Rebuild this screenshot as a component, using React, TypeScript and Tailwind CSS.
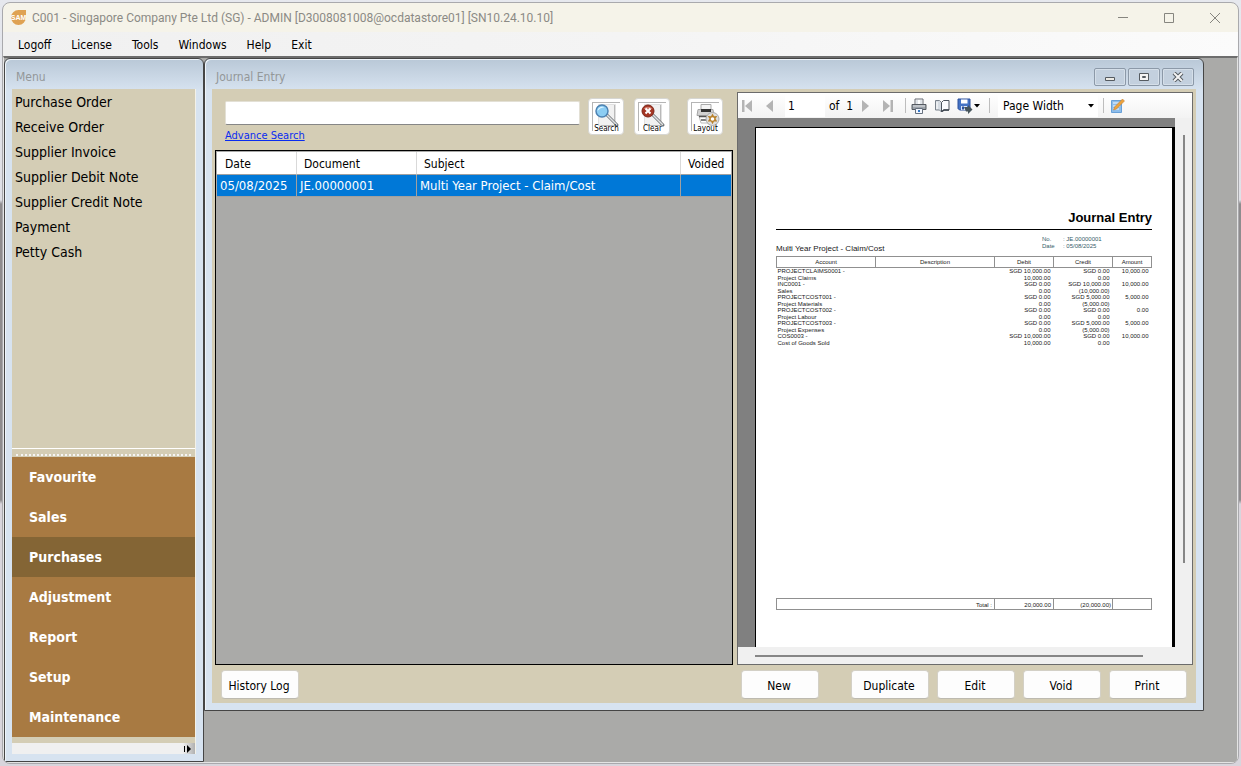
import type { ReactNode } from 'react';

const menuBar = ['Logoff', 'License', 'Tools', 'Windows', 'Help', 'Exit'];

const documents = [
  'Purchase Order',
  'Receive Order',
  'Supplier Invoice',
  'Supplier Debit Note',
  'Supplier Credit Note',
  'Payment',
  'Petty Cash',
];

const modules = ['Favourite', 'Sales', 'Purchases', 'Adjustment', 'Report', 'Setup', 'Maintenance'];

const lines = [
  { account: 'PROJECTCLAIMS0001 -', name: 'Project Claims', debit: 'SGD 10,000.00', debit2: '10,000.00', credit: 'SGD 0.00', credit2: '0.00', amount: '10,000.00' },
  { account: 'INC0001 -', name: 'Sales', debit: 'SGD 0.00', debit2: '0.00', credit: 'SGD 10,000.00', credit2: '(10,000.00)', amount: '10,000.00' },
  { account: 'PROJECTCOST001 -', name: 'Project Materials', debit: 'SGD 0.00', debit2: '0.00', credit: 'SGD 5,000.00', credit2: '(5,000.00)', amount: '5,000.00' },
  { account: 'PROJECTCOST002 -', name: 'Project Labour', debit: 'SGD 0.00', debit2: '0.00', credit: 'SGD 0.00', credit2: '0.00', amount: '0.00' },
  { account: 'PROJECTCOST003 -', name: 'Project Expenses', debit: 'SGD 0.00', debit2: '0.00', credit: 'SGD 5,000.00', credit2: '(5,000.00)', amount: '5,000.00' },
  { account: 'COS0003 -', name: 'Cost of Goods Sold', debit: 'SGD 10,000.00', debit2: '10,000.00', credit: 'SGD 0.00', credit2: '0.00', amount: '10,000.00' },
];

function Logo() {
  return (
    <svg viewBox="0 0 17 17" className="size-[17px] shrink-0" aria-hidden="true">
      <path d="M8.500 1H16v7.500a7.500 7.500 0 1 1-7.500-7.500z" fill="#dfa253" />
      <text x="8.500" y="11" textAnchor="middle" fontSize="7" fontWeight="700" fontFamily="Liberation Sans, sans-serif" fill="#fff">SAM</text>
    </svg>
  );
}

function CaptionButton({ label, children }: { label: string; children: ReactNode }) {
  return (
    <button type="button" aria-label={label} className="flex h-[30px] w-[46px] items-center justify-center">
      <svg viewBox="0 0 12 12" className="size-3" fill="none" stroke="#86857f" strokeWidth="1">{children}</svg>
    </button>
  );
}

function ChildButton({ label, children }: { label: string; children: ReactNode }) {
  return (
    <button type="button" aria-label={label} className="flex h-[18px] w-8 items-center justify-center rounded-[2px] border border-[#8c99a8] bg-[#c3d0de] shadow-[inset_0_0_0_1px_#d5dfe9]">
      <svg viewBox="0 0 12 10" className="h-[10px] w-3" fill="none" stroke="#555b61" strokeWidth="1">{children}</svg>
    </button>
  );
}

function Magnifier({ cancel = false }: { cancel?: boolean }) {
  return (
    <svg viewBox="0 0 28 24" className="h-6 w-7" aria-hidden="true">
      <path d="M5.500.500h17v21h-17z" fill="#f1f1f1" stroke="#e0e0e0" />
      <path d="M21.500 1v20.500H8" fill="none" stroke="#b9b9b9" />
      <path d="M14 11l10 10" stroke="#6d7175" strokeWidth="3" strokeLinecap="round" />
      <path d="M14 11l9.500 9.500" stroke="#dfe1e3" strokeWidth="1.500" strokeLinecap="round" />
      {cancel ? (
        <>
          <circle cx="9" cy="7" r="6" fill="#a43523" stroke="#7d2416" />
          <path d="M4.500 5a5 4 0 0 1 9 0z" fill="#cf7a6b" />
          <path d="M6.500 4.500l5 5m0-5l-5 5" stroke="#fff" strokeWidth="2" />
        </>
      ) : (
        <>
          <circle cx="9" cy="7" r="6" fill="#8ccdf3" stroke="#4c82b2" strokeWidth="1.500" />
          <path d="M4.500 7a4.500 4.500 0 0 1 7-3.500c-3 0-5 1-7 3.500z" fill="#dff4ff" />
        </>
      )}
    </svg>
  );
}

function LayoutIcon() {
  return (
    <svg viewBox="0 0 28 24" className="h-6 w-7" aria-hidden="true">
      <path d="M9 .500h10v6H9z" fill="#f4f4f4" stroke="#aaa" />
      <path d="M6 5.500h15l1 6H5z" fill="#d2d2d2" stroke="#a5a5a5" />
      <path d="M9 5h10v3H9z" fill="#333" />
      <path d="M7 12h13l2 7H9z" fill="#fff" stroke="#bbb" />
      <path d="M7 12.500h9M9 16h6" stroke="#555" strokeWidth="1.500" />
      <circle cx="20.500" cy="15" r="6.500" fill="#dedede" stroke="#aaa" />
      <path d="M20.500 9.500l1.500 2.800 3.300-.3-1.800 2.800 1.800 2.800-3.300-.2-1.500 2.900-1.500-2.900-3.300.2 1.800-2.800-1.800-2.800 3.300.3z" fill="#b9822c" />
      <circle cx="20.500" cy="15" r="1.800" fill="#fff" />
    </svg>
  );
}

function ToolButton({ label, children }: { label: string; children: ReactNode }) {
  return (
    <button type="button" className="flex h-[37px] w-9 flex-col items-center rounded-[4px] border border-[#d6d6d2] bg-white p-[3px]">
      <span className="flex h-full w-full flex-col items-center border-t border-l border-[#b5b5b5] pt-px">
        <span className="-mb-[3px] block">{children}</span>
        <span className="relative text-[8px] leading-[8px] text-black">{label}</span>
      </span>
    </button>
  );
}

function PushButton({ children }: { children: ReactNode }) {
  return (
    <button type="button" className="h-[29px] w-[78px] rounded-[4px] border border-[#d3d0c6] border-b-[#bdbab0] bg-[#fdfdfd] pt-[2px] pr-[2px] text-[12px] text-black">
      {children}
    </button>
  );
}

function NavButton({ label, last = false, back = false }: { label: string; last?: boolean; back?: boolean }) {
  return (
    <button type="button" aria-label={label} className="flex size-4 items-center justify-center">
      <svg viewBox="0 0 12 12" className={back ? 'size-3 rotate-180' : 'size-3'} aria-hidden="true">
        <path d={last ? 'M1 0v12l7-6z' : 'M3 0v12l7-6z'} fill="#b4b4b4" />
        {last && <path d="M8.500 0h2.500v12H8.500z" fill="#b4b4b4" />}
      </svg>
    </button>
  );
}

function ReportToolbar() {
  return (
    <div className="flex h-[25px] items-center bg-gradient-to-b from-white to-[#f3f3f3] pl-px text-[12px] text-black">
      <NavButton label="First page" last back />
      <div className="ml-[7px] flex"><NavButton label="Previous page" back /></div>
      <input aria-label="Page number" defaultValue="1" className="ml-[7px] h-[22px] w-10 bg-white px-[3px] outline-none" />
      <span className="ml-1 w-7 whitespace-nowrap">of&nbsp; 1</span>
      <div className="flex gap-[7px]">
        <NavButton label="Next page" />
        <NavButton label="Last page" last />
      </div>
      <i className="ml-[9px] h-[15px] w-px bg-[#bdbdbd]" />
      <button type="button" aria-label="Print report" className="ml-[5px]">
        <svg viewBox="0 0 16 16" className="size-4">
          <path d="M4 1h8v6H4z" fill="#fff" stroke="#666b73" />
          <path d="M6 2v4M10 2v4" stroke="#c4ccd5" />
          <path d="M1 6.500h14v5H1z" fill="#9da3aa" stroke="#555a61" />
          <path d="M2 8h12" stroke="#e1e4e8" />
          <path d="M4.500 10.500h7v5h-7z" fill="#f4f8ff" stroke="#67717e" />
          <path d="M7 12h2v2H7z" fill="#3478c9" />
        </svg>
      </button>
      <button type="button" aria-label="Print layout" className="ml-[7px]">
        <svg viewBox="0 0 16 16" className="size-4">
          <path d="M1.500 2.500h4l2 2v9.500l-2-2h-4z" fill="#d5dbe2" stroke="#7a828c" />
          <path d="M7.500 4.500l2-2h5.500v9.500H9.500l-2 2z" fill="#fafcff" stroke="#4c5560" />
          <path d="M8 13.500l2-1.500h5" fill="none" stroke="#39414b" strokeWidth="1.500" />
          <path d="M3 4v7" stroke="#fff" />
        </svg>
      </button>
      <button type="button" aria-label="Export" className="ml-[7px] flex items-center gap-px">
        <svg viewBox="0 0 16 16" className="size-4">
          <path d="M1 1h12v11H2.500L1 10.500z" fill="#4473c4" stroke="#2c519c" />
          <path d="M4 1.500h6.500v4H4z" fill="#fff" />
          <path d="M4 8h6v4H4z" fill="#dce6f6" />
          <path d="M5 8.500h2v3H5z" fill="#2c519c" />
          <path d="M7 9h4V7l4.500 4.500L11 16v-2.500H9z" fill="#46555c" />
        </svg>
        <svg viewBox="0 0 6 4" className="h-1 w-[6px]"><path d="M0 0h6L3 3.500z" fill="#000" /></svg>
      </button>
      <i className="ml-[9px] h-[15px] w-px bg-[#bdbdbd]" />
      <div className="relative ml-2 flex items-center">
        <select aria-label="Zoom" className="h-[22px] w-[100px] appearance-none bg-white pl-[5px] outline-none">
          <option>Page Width</option>
        </select>
        <svg viewBox="0 0 6 4" className="pointer-events-none absolute right-1 h-1 w-[6px]"><path d="M0 0h6L3 3.500z" fill="#000" /></svg>
      </div>
      <i className="ml-[5px] h-[15px] w-px bg-[#bdbdbd]" />
      <button type="button" aria-label="Edit layout" className="ml-[6px]">
        <svg viewBox="0 0 16 16" className="size-4">
          <path d="M1.500 2.500h10v12h-10z" fill="#8dbdeb" stroke="#68a0d8" />
          <path d="M3 5h7M3 8h7M3 11h6" stroke="#f2f8ff" />
          <path d="M12.500 1l2 2-8 8-3 1 1-3z" fill="#eca23c" stroke="#b8752a" strokeWidth=".5" />
        </svg>
      </button>
    </div>
  );
}

function ReportColumns() {
  return (
    <colgroup>
      <col />
      <col className="w-[119px]" />
      <col className="w-[59px]" />
      <col className="w-[59px]" />
      <col className="w-[39px]" />
    </colgroup>
  );
}

function Pair({ top, bottom }: { top: string; bottom?: string }) {
  return (
    <>
      <span className="block h-[7px]">{top}</span>
      <span className="block h-[6px]">{bottom}</span>
    </>
  );
}

function ReportPage() {
  return (
    <article className="flex min-h-0 flex-1 flex-col border-t border-r-[3px] border-l border-black bg-white px-5 pt-[82px] pb-[37px] font-['Liberation_Sans',Arial,sans-serif] text-[6px] leading-[6px] text-[#202020]">
      <h2 className="border-b border-black pb-[3px] text-right text-[13px] leading-4 font-bold text-black">Journal Entry</h2>
      <dl className="mt-[6px] ml-auto grid w-[110px] grid-cols-[21px_1fr] leading-[7px] text-[#35606a]">
        <dt>No.</dt>
        <dd>: JE.00000001</dd>
        <dt>Date</dt>
        <dd>: 05/08/2025</dd>
      </dl>
      <p className="-mt-[6px] text-[8px] leading-[9px]">Multi Year Project - Claim/Cost</p>
      <table className="mt-[3px] w-full table-fixed border-collapse">
        <ReportColumns />
        <thead>
          <tr className="h-[11px]">
            {['Account', 'Description', 'Debit', 'Credit', 'Amount'].map((h) => (
              <th key={h} className="border border-[#909090] p-0 text-center font-normal">{h}</th>
            ))}
          </tr>
        </thead>
        <tbody>
          {lines.map((l) => (
            <tr key={l.account} className="align-top">
              <td className="p-0 pl-px" colSpan={2}><Pair top={l.account} bottom={l.name} /></td>
              <td className="p-0 pr-[3px] text-right"><Pair top={l.debit} bottom={l.debit2} /></td>
              <td className="p-0 pr-[3px] text-right"><Pair top={l.credit} bottom={l.credit2} /></td>
              <td className="p-0 pr-[3px] text-right"><Pair top={l.amount} /></td>
            </tr>
          ))}
        </tbody>
      </table>
      <table className="mt-auto w-full table-fixed border-collapse">
        <ReportColumns />
        <tbody>
          <tr className="h-[11px] text-right">
            <td colSpan={2} className="border border-[#909090] p-0 pt-px pr-[2px]">Total :</td>
            <td className="border border-[#909090] p-0 pt-px pr-[2px]">20,000.00</td>
            <td className="border border-[#909090] p-0 pt-px pr-px">(20,000.00)</td>
            <td className="border border-[#909090] p-0" />
          </tr>
        </tbody>
      </table>
    </article>
  );
}

function MdiWindow({ title, controls, className, children }: { title: string; controls?: ReactNode; className: string; children: ReactNode }) {
  return (
    <section className={`flex flex-col rounded-t-[6px] border border-[#454545] bg-[#d7e3f0] bg-[linear-gradient(#b9c8d7,#d7e3f0_32px)] px-[7px] pb-[7px] shadow-[inset_1px_1px_0_#eef4fa] ${className}`}>
      <header className="flex h-[30px] shrink-0 items-center justify-between pt-[6px] pl-1">
        <h1 className="text-[12px] leading-4 text-[#939799]">{title}</h1>
        {controls}
      </header>
      {children}
    </section>
  );
}

function SideMenu() {
  return (
    <MdiWindow title="Menu" className="w-[200px] shrink-0">
      <div className="flex min-h-0 flex-1 flex-col border-r border-[#f3f1e8] bg-[#d4cdb5]">
        <ul className="flex-1 border-b border-white pt-px">
          {documents.map((d) => (
            <li key={d}>
              <a href="#" className="block pl-[3px] text-[14px] leading-[25px] text-black">{d}</a>
            </li>
          ))}
        </ul>
        <div className="mx-1 mt-1 mb-px h-[3px] border-b-2 border-dotted border-[#f5f5f5]" />
        <nav>
          {modules.map((m) => (
            <a key={m} href="#" className={`block pl-[17px] text-[14px] leading-10 font-bold text-white ${m === 'Purchases' ? 'bg-[#846535]' : 'bg-[#a87a42]'}`}>{m}</a>
          ))}
        </nav>
        <div className="mt-[6px] flex h-[11px] items-center justify-end bg-[#f0f0f0]">
          <button type="button" aria-label="Configure buttons" className="flex h-full w-3 items-center justify-center bg-gradient-to-r from-[#f0f0f0] to-[#b0b0b0] pr-1">
            <svg viewBox="0 0 7 8" className="h-2 w-[7px] shrink-0"><path d="M0 1h1v6H0zM3 0v8l4-4z" fill="#000" /></svg>
          </button>
        </div>
      </div>
    </MdiWindow>
  );
}

function EntryGrid() {
  return (
    <div className="min-h-0 flex-1 border border-black bg-[#aaaaa8] p-px">
      <table className="w-full table-fixed border-separate border-spacing-0 text-left text-[12px]">
        <colgroup>
          <col className="w-20" />
          <col className="w-[120px]" />
          <col />
          <col className="w-[50px]" />
        </colgroup>
        <thead>
          <tr className="h-[23px] bg-white text-black">
            <th className="border-r border-b border-[#d9d9d9] border-b-[#a0a0a0] p-0 pt-px pl-2 font-normal">Date</th>
            <th className="border-r border-b border-[#d9d9d9] border-b-[#a0a0a0] p-0 pt-px pl-[7px] font-normal">Document</th>
            <th className="border-r border-b border-[#d9d9d9] border-b-[#a0a0a0] p-0 pt-px pl-[7px] font-normal">Subject</th>
            <th className="border-b border-[#a0a0a0] p-0 pt-px pl-[7px] font-normal">Voided</th>
          </tr>
        </thead>
        <tbody>
          <tr className="h-[22px] bg-[#0078d7] text-[13px] leading-4 text-white">
            <td className="border-r border-b border-[#a0a0a0] p-0 pl-[3px]">05/08/2025</td>
            <td className="border-r border-b border-[#a0a0a0] p-0 pl-[3px]">JE.00000001</td>
            <td className="border-r border-b border-[#a0a0a0] p-0 pl-[3px]">Multi Year Project - Claim/Cost</td>
            <td className="border-b border-[#a0a0a0] p-0" />
          </tr>
        </tbody>
      </table>
    </div>
  );
}

function JournalEntry() {
  return (
    <MdiWindow
      title="Journal Entry"
      className="mb-[51px] min-w-0 flex-1"
      controls={
        <div className="flex gap-[2px] pr-[2px]">
          <ChildButton label="Minimise window"><path d="M1.500 5.500h9v3h-9z" fill="#eceae4" /></ChildButton>
          <ChildButton label="Restore window"><path d="M1.500 1.500h9v7h-9z" fill="#f4f4f4" /><path d="M4.500 4.500h3v1h-3z" /></ChildButton>
          <ChildButton label="Close window">
            <path d="M2 1l8 8M10 1L2 9" strokeWidth="4" />
            <path d="M2 1l8 8M10 1L2 9" stroke="#f4f4f4" strokeWidth="2" />
          </ChildButton>
        </div>
      }
    >
      <div className="flex min-h-0 flex-1 flex-col bg-[#d4cdb5] pt-[3px]">
        <div className="flex min-h-0 flex-1 gap-1 px-[3px]">
          <div className="flex min-w-0 flex-1 flex-col">
            <div className="flex h-[58px] pt-[6px] pl-[10px]">
              <div className="flex min-w-0 flex-1 flex-col items-start pt-[3px]">
                <input aria-label="Search text" className="h-6 w-full rounded-[2px] border border-[#e3e0d5] border-b-[#868686] bg-white px-1 text-[12px] outline-none" />
                <a href="#" className="mt-[3px] text-[11px] leading-4 text-[#0a2cf0] underline">Advance Search</a>
              </div>
              <div className="ml-2 flex shrink-0 pr-[10px]">
                <ToolButton label="Search"><Magnifier /></ToolButton>
                <div className="mr-[17px] ml-[10px]"><ToolButton label="Clear"><Magnifier cancel /></ToolButton></div>
                <ToolButton label="Layout"><LayoutIcon /></ToolButton>
              </div>
            </div>
            <EntryGrid />
          </div>
          <div className="flex w-[456px] shrink-0 flex-col border border-[#6b6b6b]">
            <ReportToolbar />
            <div className="flex min-h-0 flex-1">
              <div className="flex min-w-0 flex-1 flex-col bg-[#808080] pt-[9px] pl-[17px]">
                <ReportPage />
              </div>
              <div className="w-[17px] bg-[#f0f0f0] pt-[17px] pl-2">
                <div className="h-[428px] w-[2px] bg-[#868686]" />
              </div>
            </div>
            <div className="h-[17px] bg-[#f0f0f0] pt-2 pl-[17px]">
              <div className="h-[2px] w-[388px] bg-[#868686]" />
            </div>
          </div>
        </div>
        <footer className="flex h-[38px] shrink-0 items-center gap-2 px-[9px] pt-px">
          <PushButton>History Log</PushButton>
          <div className="mr-6 ml-auto"><PushButton>New</PushButton></div>
          <PushButton>Duplicate</PushButton>
          <PushButton>Edit</PushButton>
          <PushButton>Void</PushButton>
          <PushButton>Print</PushButton>
        </footer>
      </div>
    </MdiWindow>
  );
}

export default function App() {
  return (
    <div className="h-screen min-h-[600px] bg-[#c4c4c8] bg-[linear-gradient(#e6e8ee_0,#dfe0e6_200px,#8e8c8e_204px,#8e8c8e_500px,#d8d5dc_504px,#d8d5dc_100%)] p-[2px] font-['DejaVu_Sans_Condensed','Noto_Sans',sans-serif]">
      <div className="flex h-full flex-col overflow-hidden rounded-[8px] border border-[#a9a9ad] bg-[#f5f3e9]">
        <header className="flex h-[29px] shrink-0 items-center pl-[7px]">
          <Logo />
          <span className="ml-[5px] flex-1 font-['Roboto',sans-serif] text-[12px] whitespace-nowrap text-[#8b8a85]">
            C001 - Singapore Company Pte Ltd (SG) - ADMIN [D3008081008@ocdatastore01] [SN10.24.10.10]
          </span>
          <CaptionButton label="Minimise"><path d="M1 5.500h10" /></CaptionButton>
          <CaptionButton label="Maximise"><path d="M1.500 1.500h9v9h-9z" /></CaptionButton>
          <CaptionButton label="Close"><path d="M1 1l10 10M11 1L1 11" /></CaptionButton>
        </header>
        <nav className="flex h-6 shrink-0 items-center gap-5 bg-gradient-to-r from-[#f0f0f0] via-[#f4f4f4] to-[#fbfbfb] pt-px pl-[15px] text-[12px] text-black">
          {menuBar.map((m) => (
            <button key={m} type="button">{m}</button>
          ))}
        </nav>
        <main className="flex min-h-0 flex-1 border-x border-t-2 border-b border-[#e4e4e4] border-t-[#6d6d6d] bg-[#aaaaa8] pr-[33px]">
          <SideMenu />
          <JournalEntry />
        </main>
      </div>
    </div>
  );
}
